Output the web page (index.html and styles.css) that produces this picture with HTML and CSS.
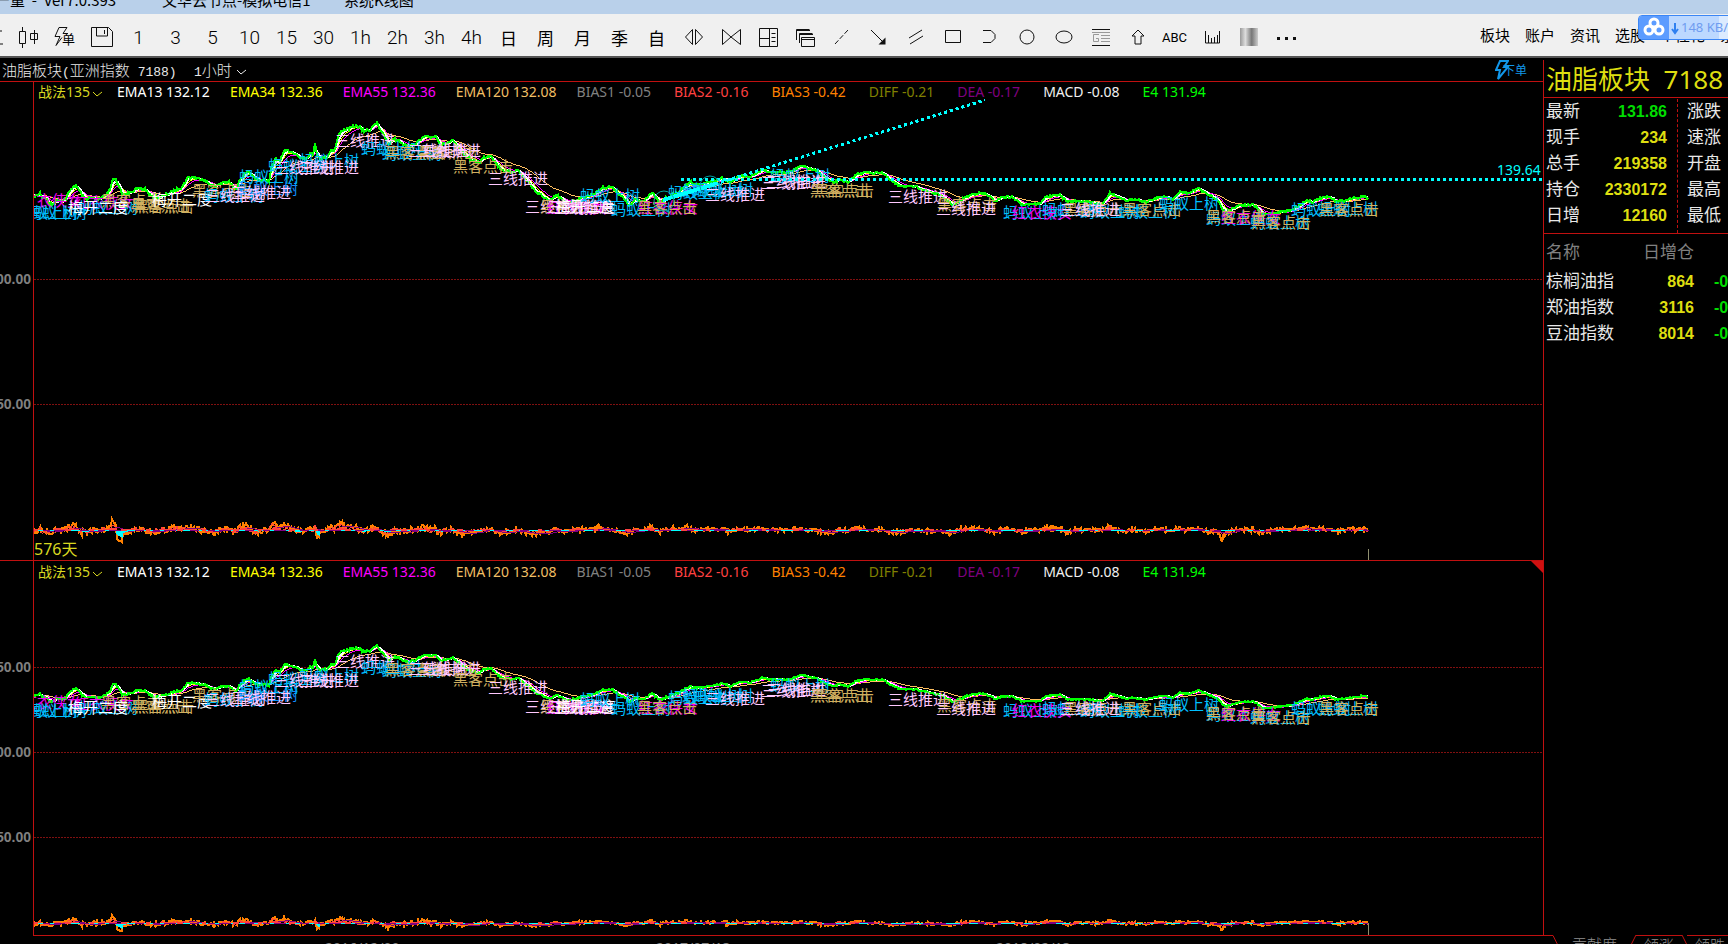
FILE: index.html
```html
<!DOCTYPE html>
<html lang="zh-CN">
<head>
<meta charset="utf-8">
<title>系统K线图</title>
<link rel="stylesheet" href="styles.css">
</head>
<body>
<header class="titlebar">
  <span class="app">产重 &nbsp;- &nbsp;Ver7.0.393</span>
  <span class="node">文华云节点-模拟电信1</span>
  <span>系统K线图</span>
</header>

<nav class="toolbar">
  <div class="tools">
    <button class="tool first" aria-label="分时"><svg width="24" height="24"><path d="M14 6h9M14 19h10M18 6v13"/></svg></button>
    <button class="tool" aria-label="K线"><svg width="24" height="24"><path d="M3.500 6.500h6v12h-6zM6.500 2v4M6.500 19v4M14.500 8.500h7v6h-7zM18.500 5v14"/></svg></button>
    <button class="tool" aria-label="弹"><svg width="24" height="24"><path d="M6 2.500h8l-4 6h5M6 2.500l-4 9h5l-4 9 6-8"/></svg><span class="sub">单</span></button>
    <button class="tool" aria-label="保存"><svg width="24" height="24"><path d="M1.500 2.500h17l4 4v15h-21zM6.500 3v8h11V3M14.500 5v4"/></svg></button>
    <button class="tool">1</button><button class="tool">3</button><button class="tool">5</button><button class="tool">10</button><button class="tool">15</button><button class="tool">30</button><button class="tool">1h</button><button class="tool">2h</button><button class="tool">3h</button><button class="tool">4h</button>
    <button class="tool cjk">日</button><button class="tool cjk">周</button><button class="tool cjk">月</button><button class="tool cjk">季</button><button class="tool cjk">自</button>
    <button class="tool" aria-label="放宽"><svg width="24" height="24"><path d="M10.500 4.500v15L3.500 12zM13.500 4.500v15L20.500 12z"/></svg></button>
    <button class="tool" aria-label="收窄"><svg width="24" height="24"><path d="M3.500 4.500v15L12 12zM21.500 4.500v15L12 12z"/></svg></button>
    <button class="tool" aria-label="布局"><svg width="24" height="24"><path d="M3.500 3.500h18v18h-18zM13.500 3v18M3 13.500h10M15.500 8.500h4M15.500 12.500h4M15.500 16.500h4"/></svg></button>
    <button class="tool" aria-label="窗口"><svg width="24" height="24"><path d="M3.500 15V4.500h13M3 5.500h14M6.500 18V8.500h13M6 9.500h14M8.500 12.500h13v9h-13zM8 14.500h14"/></svg></button>
    <button class="tool" aria-label="线段"><svg width="24" height="24"><path d="M5 19L18 5" stroke-dasharray="5 2"/></svg></button>
    <button class="tool" aria-label="箭头"><svg width="24" height="24"><path d="M4 5l12 12"/><path class="fill" d="M18.500 12.500v7h-7z"/></svg></button>
    <button class="tool" aria-label="平行线"><svg width="24" height="24"><path d="M5 13l13-8M6 19l13-8"/></svg></button>
    <button class="tool" aria-label="矩形"><svg width="24" height="24"><path d="M4.500 5.500h15v12h-15z"/></svg></button>
    <button class="tool" aria-label="圆弧"><svg width="24" height="24"><path d="M5 5.500h8l4 4v4l-4 4H5"/></svg></button>
    <button class="tool" aria-label="圆"><svg width="24" height="24"><circle cx="12" cy="12" r="7"/></svg></button>
    <button class="tool" aria-label="椭圆"><svg width="24" height="24"><ellipse cx="12" cy="12" rx="8" ry="6"/></svg></button>
    <button class="tool" aria-label="黄金分割"><svg width="24" height="24"><path d="M3 4.500h18M3 20.500h18"/><path class="grey" d="M3 7.500h18M12 10.500h9M12 13.500h9M12 16.500h9M10 9.500H4.500v7h5v-3H7"/></svg></button>
    <button class="tool" aria-label="向上"><svg width="24" height="24"><path d="M12 5l6 6h-3v8H9v-8H6z"/></svg></button>
    <button class="tool abc">ABC</button>
    <button class="tool" aria-label="标尺"><svg width="24" height="24"><path d="M5.500 6v12h14V6M8.500 18v-8M11.500 18v-5M14.500 18v-6M17.500 18v-8"/></svg></button>
    <button class="tool" aria-label="颜色"><span class="swatch"></span></button>
    <button class="tool" aria-label="更多"><svg width="24" height="24"><path class="fill" d="M3 12h3v3H3zM11 12h3v3h-3zM19 12h3v3h-3z"/></svg></button>
  </div>
  <div class="menu">
    <a href="#">板块</a><a href="#">账户</a><a href="#">资讯</a><a href="#">选股</a><a href="#">个性化</a><a href="#">系统</a>
  </div>
  <div class="speed">
    <svg class="cloud" width="30" height="25"><circle cx="15" cy="8" r="4"/><circle cx="10" cy="15" r="4"/><circle cx="20" cy="15" r="4"/></svg>
    <svg width="12" height="14"><path d="M6 2v9M3 8l3 4 3-4"/></svg>
    <span>148 KB/s</span>
  </div>
</nav>

<main class="work">
  <section class="charts">
    <div class="chart-head">
      <span class="name">油脂板块<i>(</i>亚洲指数<i> 7188)</i></span>
      <button class="period"><i>1</i>小时<svg width="12" height="8"><path d="M1 2l4 4 5-4"/></svg></button>
      <button class="order"><svg width="14" height="20"><path d="M5 1h8L9 7h4L3 19l2-9H1z"/></svg>下单</button>
    </div>
    <div class="panel upper">
      <svg class="plot" id="upper"></svg>
      <div class="legend"></div>
      <span class="days">576天</span>
    </div>
    <div class="panel lower">
      <svg class="plot" id="lower"></svg>
      <div class="legend"></div>
      <span class="corner"></span>
    </div>
  </section>

  <aside class="quote">
    <h1>油脂板块 &nbsp;7188</h1>
    <div class="stats">
      <dl class="now">
        <div><dt>最新</dt><dd class="down">131.86</dd></div>
        <div><dt>现手</dt><dd>234</dd></div>
        <div><dt>总手</dt><dd>219358</dd></div>
        <div><dt>持仓</dt><dd>2330172</dd></div>
        <div><dt>日增</dt><dd>12160</dd></div>
      </dl>
      <dl class="more">
        <div><dt>涨跌</dt></div><div><dt>速涨</dt></div><div><dt>开盘</dt></div><div><dt>最高</dt></div><div><dt>最低</dt></div>
      </dl>
    </div>
    <table class="members">
      <thead><tr><th>名称</th><th class="num">日增仓</th><th></th></tr></thead>
      <tbody>
        <tr><td>棕榈油指</td><td class="num">864</td><td class="chg">-0</td></tr>
        <tr><td>郑油指数</td><td class="num">3116</td><td class="chg">-0</td></tr>
        <tr><td>豆油指数</td><td class="num">8014</td><td class="chg">-0</td></tr>
      </tbody>
    </table>
  </aside>
</main>

<footer class="bottom">
  <svg class="dates"><path d="M33 .5H3000"/><text x="325" y="18">2016/12/09</text><text x="656" y="18">2017/07/13</text><text x="996" y="18">2018/02/13</text></svg>
  <div class="tabs">
    <svg width="15" height="10"><path d="M0 .5h10l5 10"/></svg>
    <button>贡献度</button>
    <svg width="5" height="10"><path d="M0 10L5 0"/></svg>
    <button class="lined">领涨</button>
    <svg width="5" height="10"><path d="M0 0l5 10"/></svg>
    <button class="lined">领跌</button>
  </div>
</footer>
<script src="chart.js"></script>
</body>
</html>
```
FILE: styles.css
```css
* { box-sizing: border-box; }
body {
  margin: 0;
  height: 100vh;
  display: flex;
  flex-direction: column;
  overflow: hidden;
  background: #000;
  color: #e8e8e8;
  font-family: "Noto Sans", "Noto Sans CJK SC", sans-serif;
  font-size: 14px;
}
button {
  padding: 0;
  border: 0;
  background: none;
  color: inherit;
  font: inherit;
}
svg { fill: none; flex: none; }
i { font-style: normal; }

.titlebar {
  height: 14px;
  flex: none;
  display: flex;
  align-items: flex-end;
  padding-bottom: 4px;
  overflow: hidden;
  background: #b9d0ea;
  color: #000;
  font-family: "Noto Sans CJK SC", sans-serif;
  font-size: 15px;
  line-height: 20px;
  white-space: nowrap;
}
.app { margin-left: -5px; width: 167px; }
.node { width: 182px; }

.toolbar {
  position: relative;
  height: 44px;
  flex: none;
  display: flex;
  justify-content: space-between;
  border-bottom: 2px solid #555;
  background: #f0f0f0;
  color: #000;
  overflow: hidden;
}
.tools { display: flex; padding-top: 3px; }
.tool {
  position: relative;
  width: 37px;
  height: 40px;
  display: flex;
  align-items: center;
  justify-content: center;
  font-family: Roboto, sans-serif;
  font-weight: 300;
  font-size: 19px;
}
.first { margin-left: -28px; }
.cjk { font-family: "Noto Sans CJK SC", sans-serif; font-weight: 400; font-size: 17px; }
.abc { font-size: 13px; font-weight: 400; }
.tool svg { stroke: #111; }
.tool .fill { fill: #111; stroke: none; }
.tool .grey { stroke: #999; }
.sub {
  position: absolute;
  left: 16px;
  top: 13px;
  font-family: "Noto Sans CJK SC", sans-serif;
  font-weight: 400;
  font-size: 13px;
  line-height: 18px;
}
.swatch {
  width: 18px;
  height: 18px;
  background: linear-gradient(90deg, #999, #ddd 30%, #777 65%, #ccc);
}
.menu {
  width: 248px;
  flex: none;
  display: flex;
  gap: 15px;
  font-family: "Noto Sans CJK SC", sans-serif;
  font-size: 15px;
  line-height: 42px;
  white-space: nowrap;
}
.menu a { color: #000; text-decoration: none; }
.speed {
  position: absolute;
  right: -8px;
  top: 1px;
  width: 98px;
  height: 25px;
  display: flex;
  align-items: center;
  border: 1px solid #3b86f5;
  border-radius: 4px;
  overflow: hidden;
  background: linear-gradient(90deg, #bcd8ff 80px, #dcebff 80px);
  color: #6f9cf0;
  font-size: 13px;
  line-height: 20px;
  white-space: nowrap;
}
.speed span { padding-bottom: 2px; }
.speed svg { stroke: #2f80f0; stroke-width: 2; }
.speed .cloud { background: #5c9cff; stroke: #fff; stroke-width: 3; }

.work { flex: 1; min-height: 0; display: grid; grid-template-columns: minmax(0, 1fr) 185px; }
.charts { display: flex; flex-direction: column; min-height: 0; }
.chart-head {
  height: 23px;
  flex: none;
  display: flex;
  align-items: center;
  padding: 0 16px 0 2px;
  font-family: "Noto Sans CJK SC", sans-serif;
  font-weight: 300;
  font-size: 15px;
  white-space: nowrap;
}
.chart-head i { font-family: "Liberation Mono", monospace; font-size: 13px; }
.name { width: 192px; }
.period svg { stroke: #e8e8e8; margin-left: 4px; }
.order { margin-left: auto; display: flex; align-items: center; color: #1296e8; font-weight: 400; font-size: 12px; }
.order svg { stroke: #1296e8; stroke-width: 2; margin-right: -6px; }

.panel { position: relative; border-top: 1px solid #c01010; min-height: 0; overflow: hidden; }
.upper { flex: 479 1 0; }
.lower { flex: 375 1 0; }
.plot { display: block; width: 100%; height: 100%; }
.legend {
  position: absolute;
  left: 38px;
  top: 0;
  display: flex;
  gap: 20px;
  line-height: 20px;
  white-space: nowrap;
}
.lower .legend { top: 1px; }
.legend button { width: 59px; color: #d8d820; display: flex; align-items: center; }
.legend svg { stroke: #d8d820; margin: 4px 0 0 2px; }
.legend .osc { margin-right: 3px; }
.days { position: absolute; left: 34px; bottom: 0; font-size: 16px; line-height: 22px; color: #d8d820; }
.corner {
  position: absolute;
  right: 0;
  top: 0;
  border: 6px solid;
  border-color: #d01010 #d01010 transparent transparent;
}
.plot text { font-family: "Noto Sans CJK SC", sans-serif; font-weight: 400; font-size: 15px; }
.plot .axis { font-family: "Liberation Sans", sans-serif; font-weight: 700; font-size: 14px; fill: #808080; }
.plot .level { font-family: "Noto Sans", sans-serif; font-size: 14px; fill: #0ff; }
.plot path, .plot line { shape-rendering: crispEdges; }

.quote { margin-top: 2px; border-left: 1px solid #c01010; overflow: hidden; white-space: nowrap; font-size: 17px; font-family: "Liberation Sans", "Noto Sans CJK SC", sans-serif; }
.quote h1 {
  margin: 0;
  padding-left: 2px;
  height: 38px;
  border-bottom: 1px solid #c01010;
  color: #dede10;
  font-family: "Noto Sans", "Noto Sans CJK SC", sans-serif;
  font-weight: 400;
  font-size: 26px;
  line-height: 38px;
}
.stats { display: flex; height: 136px; padding-top: 1px; border-bottom: 1px solid #c01010; }
.stats dl { margin: 0; }
.now { width: 134px; padding: 0 10px 0 2px; border-right: 1px dashed #c01010; }
.more { padding-left: 9px; }
.stats dl div { display: flex; justify-content: space-between; line-height: 26px; }
.stats dd { margin: 0; font-weight: 700; font-size: 16px; color: #dede10; }
.stats .down, .members .chg { color: #00dc00; }
.members { width: 206px; border-collapse: collapse; table-layout: fixed; margin-top: 3px; }
.members th, .members td { padding: 0; height: 26px; line-height: 26px; text-align: left; font-weight: 400; }
.members th { height: 32px; color: #808080; width: 75px; padding-left: 2px; }
.members td:first-child { padding-left: 2px; }
.members .num { text-align: right; }
.members td.num, .members .chg { font-weight: 700; font-size: 16px; color: #dede10; }
.members .chg { color: #00dc00; padding-left: 20px; }

.bottom { height: 9px; flex: none; display: flex; overflow: hidden; }
.dates { flex: 1; height: 20px; stroke: none; }
.dates path { stroke: #c01010; }
.dates text { fill: #888; font-size: 14px; }
.tabs { width: 185px; flex: none; display: flex; align-items: flex-start; color: #909090; overflow: hidden; font-family: "Noto Sans CJK SC", sans-serif; font-weight: 300; }
.tabs svg { stroke: #c01010; }
.tabs button { flex: none; padding: 0 14px; line-height: 18px; font-size: 15px; }
.tabs .lined { padding: 0 8px; border-top: 1px solid #c01010; }
```
FILE: chart.js
```js
const INDICATORS = [
  ["EMA13 132.12", "#fff"], ["EMA34 132.36", "#ff0"], ["EMA55 132.36", "#f0f"],
  ["EMA120 132.08", "#f0be64"], ["BIAS1 -0.05", "#808080"], ["BIAS2 -0.16", "#ff4040"],
  ["BIAS3 -0.42", "#ff8000"], ["DIFF -0.21", "#808000"], ["DEA -0.17", "#800080"],
  ["MACD -0.08", "#f0f0f0"], ["E4 131.94", "#0f0"]
];
document.querySelectorAll(".legend").forEach(el => {
  el.innerHTML = '<button>战法135<svg width="12" height="8"><path d="M1 2l4 4 5-4"/></svg></button>' +
    INDICATORS.map(([t, c], i) => `<span class="${i > 3 ? "osc" : "avg"}" style="color:${c}">${t}</span>`).join("");
});

const KEYS = "34,195 37,195 40,192 42,196 46,197 50,204 53,203 57,199 62,200 66,197 70,190 74,184 78,187 82,194 86,198 92,197 98,198 102,196 106,193 110,189 113,178 115,177 118,184 122,193 126,195 130,190 135,189 140,188 145,188 148,192 152,196 158,197 163,195 170,192 178,188 183,185 187,177 193,176 198,178 203,178 208,182 215,186 220,182 226,182 229,181 233,186 237,187 240,178 244,174 249,171 254,177 258,179 266,179 269,180 272,165 276,158 280,160 284,151 289,150 295,152 300,157 306,157 310,152 313,153 315,143 317,153 320,157 327,156 331,149 335,149 338,136 342,129 348,128 355,125 360,126 362,130 370,129 374,123 377,122 380,129 384,134 389,144 393,138 399,139 405,144 409,147 414,143 419,140 424,136 430,136 436,135 441,144 453,140 460,149 466,155 473,160 480,161 484,156 491,154 497,164 504,170 510,171 518,169 523,175 530,183 536,191 545,197 550,201 556,194 565,201 570,201 578,198 588,195 597,191 603,186 612,186 617,191 624,198 630,205 635,199 643,200 650,193 653,193 660,202 667,197 680,190 690,181 697,184 705,182 715,180 722,177 730,181 741,175 750,176 757,172 763,168 769,171 778,171 785,172 793,169 802,165 810,168 817,170 825,177 833,182 840,178 848,182 857,173 865,171 874,172 882,171 890,179 897,184 910,186 917,186 930,191 940,194 953,204 960,200 968,195 977,192 986,193 995,200 1003,196 1012,196 1021,203 1040,203 1045,196 1060,194 1068,201 1078,200 1090,201 1102,203 1110,192 1118,196 1126,200 1135,198 1147,201 1158,196 1168,196 1172,199 1180,191 1190,192 1198,187 1207,193 1217,198 1223,209 1227,211 1233,207 1240,204 1253,204 1258,208 1263,214 1273,212 1280,211 1287,210 1293,208 1300,204 1307,199 1313,201 1320,197 1330,196 1335,200 1343,200 1350,198 1357,197 1363,195 1369,198"
  .split(" ").map(p => p.split(",").map(Number));

let seed = 7;
const rnd = () => (seed = (seed * 16807) % 2147483647) / 2147483647 - 0.5;
const xs = [], price = [];
for (let k = 1; k < KEYS.length; k++) {
  const [x0, y0] = KEYS[k - 1], [x1, y1] = KEYS[k];
  for (let x = x0; x < x1; x++) {
    const y = y0 + 1 + (y1 - y0) * (x - x0) / (x1 - x0) + rnd() * (x < 700 ? 3 : 2);
    xs.push(x);
    price.push((529 - y) / 2.5);
  }
}
const ema = (a, n) => { let v = a[0]; return a.map(p => (v += (p - v) / n)); };
const averages = [[ema(price, 22), "#ffc060", 1], [ema(price, 8), "#f0f", 1], [ema(price, 5), "#ff0", 1], [ema(price, 3), "#fff", 2], [price, "#0f0", 2]];
const sub = (a, b) => a.map((v, i) => v - b[i]);
const rough = (a, size) => a.map((v, i) => v + rnd() * size * (xs[i] < 450 ? 1.3 : .9));
const slow = rough(sub(price, ema(price, 7)), 3), fast = rough(sub(price, ema(price, 4)), 2);
const diff = sub(ema(price, 4), ema(price, 9)), dea = ema(diff, 5);
const hist = sub(diff, dea).map((v, i) => v + (xs[i] > 115 && xs[i] < 123 ? -2.2 : xs[i] > 315 && xs[i] < 320 ? -2 : 0));
const spike = (from, to, size) => xs.forEach((x, i) => { if (x >= from && x <= to) slow[i] += size; });
spike(111, 114, 2.5);
spike(117, 122, -5.5);
spike(316, 319, -4);
spike(1221, 1223, -3.5);

const B = "#00bfff", K = "#d0b060", P = "#ffc8ff", M = "#f000f0", W = "#fff", D = "#1090ff";
const NAMES = { [B]: "蚂蚁上树", [D]: "蚂蚁上树", [K]: "黑客点击", [P]: "三线推进", [M]: "红衣侠女", [W]: "梅开二度" };
const SIGNALS = [
  [M, 22, 201], [B, 18, 213], [B, 27, 213], [M, 74, 203], [B, 78, 208], [K, 101, 201], [W, 68, 208],
  [K, 131, 206], [K, 134, 207], [W, 152, 200], [K, 192, 191], [B, 204, 196], [P, 205, 196], [D, 238, 189],
  [B, 239, 177], [P, 231, 193], [B, 268, 166], [B, 299, 161], [P, 274, 168], [P, 299, 168], [P, 335, 141],
  [B, 361, 149], [B, 382, 154], [K, 385, 153], [K, 418, 153], [P, 408, 151], [P, 421, 151], [K, 453, 167],
  [P, 488, 179], [P, 525, 207], [K, 540, 207], [M, 547, 208], [P, 548, 207], [P, 554, 208], [W, 556, 207],
  [B, 580, 196], [B, 611, 210], [M, 638, 208], [K, 637, 208], [B, 668, 193], [B, 682, 191], [B, 693, 190],
  [P, 705, 195], [B, 770, 176], [P, 761, 183], [P, 766, 182], [K, 810, 191], [K, 814, 191], [P, 888, 197],
  [K, 937, 205], [P, 936, 209], [B, 1003, 213], [M, 1012, 213], [B, 1042, 210], [B, 1080, 212],
  [K, 1063, 210], [P, 1060, 210], [B, 1118, 212], [K, 1122, 210], [B, 1159, 204],
  [B, 1206, 219], [M, 1221, 218], [K, 1206, 217], [B, 1250, 223], [K, 1251, 223], [B, 1291, 210], [B, 1318, 209], [K, 1319, 210]
];

function draw(id, baseHeight, baseZero, unit, levels, offset) {
  const svg = document.getElementById(id);
  const k = svg.clientHeight / baseHeight;
  const zero = Math.round(baseZero * k), scale = unit * k;
  const Y = v => Math.round(zero - v * scale);
  const line = (a, c, w, m = 1, dy = 0) => `<path d="M${a.map((v, i) => xs[i] + " " + (Y(v * m) + dy)).join("L")}" stroke="${c}" stroke-width="${w}"/>`;
  let s = "";
  levels.forEach(v => { s += `<line x1="34" x2="100%" y1="${Y(v) + .5}" y2="${Y(v) + .5}" stroke="#801010" stroke-dasharray="2 1"/>`; });
  averages.forEach(([a, c, w]) => { s += line(a, c, w); });
  SIGNALS.forEach(([c, x, y]) => {
    const v = (529 - (y - 13)) / 2.5;
    s += `<text x="${x}" y="${Y(v) + 18}" fill="${c}">${NAMES[c]}</text>`;
  });
  const mid = zero + 1;
  s += line(slow, "#ff8000", 2, .6, 1) + line(fast, "#ff4040", 1, .6, 1) + line(dea, "#800080", 1, .7, 1);
  hist.forEach((v, i) => {
    const h = Math.round(v * scale);
    if (h) s += `<path d="M${xs[i] + .5} ${mid}V${mid - h}" stroke="${h < 0 ? "#0ff" : "#ff4040"}"/>`;
  });
  s += `<path d="M34 ${mid}.5H1369" stroke="#800080"/><path d="M34 ${mid}.5H1369" stroke="#0ff" stroke-dasharray="9 7 4 12 14 9"/>`;
  s += `<path d="M34 ${mid}H1369" stroke="#ff4040" stroke-width="2" stroke-dasharray="4 27 6 19"/>`;
  s += `<path d="M1368.500 ${zero + offset}V${svg.clientHeight}" stroke="#909070"/>`;
  if (id === "upper") {
    const t = Y(139.64);
    s += `<path d="M681 ${t - .5}H3000" stroke="#0ff" stroke-width="3" stroke-dasharray="3 3"/>
      <path d="M715 ${t + 4}L985 ${t - 80}" stroke="#0ff" stroke-width="3" stroke-dasharray="3 3"/>
      <path d="M663 ${t + 20}L715 ${t + 4}" stroke="#0ff" stroke-width="4"/>
      <circle cx="664" cy="${t + 21}" r="10" stroke="#00a0a0"/><circle cx="710" cy="${t + 6}" r="10" stroke="#00a0a0"/>
      <text class="level" x="1497" y="${t - 5}">139.64</text>`;
  }
  s += `<rect width="33" height="100%" fill="#000"/><path d="M33.500 0V2000" stroke="#c01010"/>`;
  levels.forEach(v => { s += `<text class="axis" x="31" y="${Y(v) + 5}" text-anchor="end">${v}.00</text>`; });
  svg.innerHTML = s;
}
function drawAll() {
  draw("upper", 478, 447, 2.5, [100, 50], 20);
  draw("lower", 374, 361, 1.7, [150, 100, 50], 1);
}
drawAll();
addEventListener("resize", drawAll);
```
